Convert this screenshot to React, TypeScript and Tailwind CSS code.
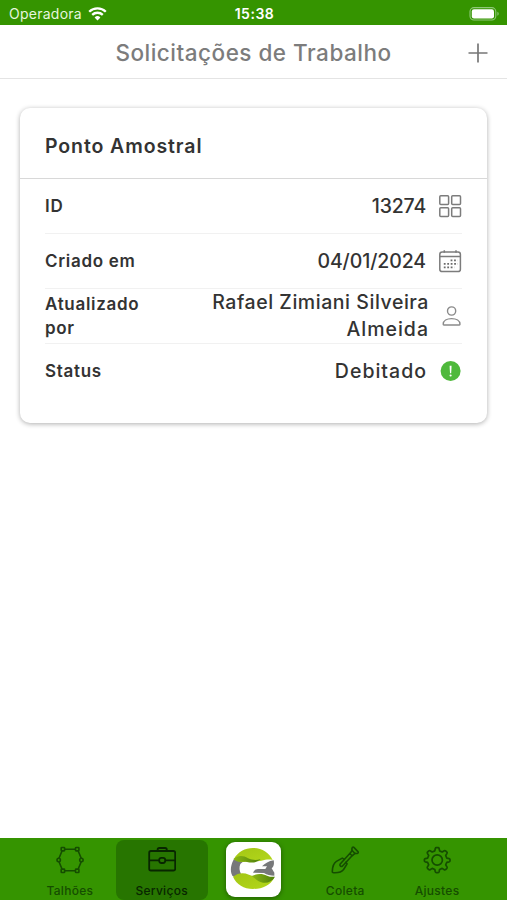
import { ReactNode } from "react";
import clsx from "clsx";

function WifiIcon() {
  return (
    <svg width="19" height="14" viewBox="0 0 19 14" fill="#fff">
      <path d="M9.5 13.4 6.6 10.4a4.2 4.2 0 0 1 5.8 0z" />
      <path
        d="M4.2 7.9a7.6 7.6 0 0 1 10.6 0M1.2 4.8a11.8 11.8 0 0 1 16.6 0"
        fill="none"
        stroke="#fff"
        strokeWidth="2.3"
      />
    </svg>
  );
}

function BatteryIcon() {
  return (
    <svg width="31" height="14" viewBox="0 0 31 14" fill="none">
      <rect x="1" y="0.6" width="25.8" height="12.4" rx="4" stroke="#8fc878" strokeWidth="1.1" />
      <rect x="2.8" y="2.2" width="22.2" height="9.2" rx="2.2" fill="#fff" />
      <path d="M28.4 4.8v4a2.2 2.2 0 0 0 0-4z" fill="#8fc878" />
    </svg>
  );
}

function GridIcon() {
  return (
    <svg width="24" height="24" viewBox="0 0 24 24" fill="none" stroke="#7c7c7c" strokeWidth="1.5">
      <rect x="1.8" y="1.8" width="8.8" height="8.8" rx="1" />
      <rect x="13.7" y="1.8" width="8.8" height="8.8" rx="1" />
      <rect x="1.8" y="13.7" width="8.8" height="8.8" rx="1" />
      <rect x="13.7" y="13.7" width="8.8" height="8.8" rx="1" />
    </svg>
  );
}

function CalendarIcon() {
  return (
    <svg width="24" height="24" viewBox="0 0 24 24" fill="none" stroke="#7c7c7c" strokeWidth="1.5">
      <rect x="1.8" y="3" width="20.6" height="19.6" rx="2.4" />
      <path d="M1.8 7.6h20.6M6.3 1.2v2.6M18 1.2v2.6" />
      <path
        d="M12.6 11.4h7M5.8 14.8h14M5.8 18.3h10.5"
        stroke="#6c6c6c"
        strokeWidth="1.8"
        strokeDasharray="1.8 1.65"
      />
    </svg>
  );
}

function PersonIcon() {
  return (
    <svg width="24" height="24" viewBox="0 0 24 24" fill="none" stroke="#8a8a8a" strokeWidth="1.4">
      <circle cx="13.6" cy="7" r="4.1" />
      <path d="M5.2 20.300c0-3.600 3.700-5.700 8.400-5.700s8.400 2.100 8.400 5.700c0 .5-.3.700-.7.700H5.900c-.4 0-.7-.2-.7-.7z" />
    </svg>
  );
}

function StatusIcon() {
  return (
    <svg width="24" height="24" viewBox="0 0 24 24">
      <circle cx="12.6" cy="12" r="10" fill="#4fb93c" />
      <path d="M11.6 6.8h2l-.4 7.400h-1.200z" fill="#fff" />
      <circle cx="12.6" cy="16.5" r="1.1" fill="#fff" />
    </svg>
  );
}

function FieldIcon() {
  return (
    <svg width="28" height="28" viewBox="0 0 28 28" fill="none" stroke="#154d00" strokeWidth="1.6">
      <path d="M8.6 3.2h11M8.600 24.800h11M6 5l-3 7.200M6 23l-3-7.200M22.200 5l3 7.200M22.200 23l3-7.200" />
      <rect x="5.2" y="1.5" width="3.4" height="3.4" rx="0.6" />
      <rect x="19.5" y="1.5" width="3.4" height="3.4" rx="0.6" />
      <rect x="5.2" y="23.1" width="3.4" height="3.4" rx="0.6" />
      <rect x="19.5" y="23.1" width="3.4" height="3.4" rx="0.6" />
      <circle cx="2.7" cy="14" r="1.7" />
      <circle cx="25.4" cy="14" r="1.7" />
    </svg>
  );
}

function BriefcaseIcon() {
  return (
    <svg width="28" height="28" viewBox="0 0 28 28" fill="none" stroke="#082600" strokeWidth="1.8">
      <rect x="1.2" y="5" width="26" height="19.5" rx="1.8" />
      <path d="M9.6 5V3.8c0-1 .8-1.8 1.8-1.8h5.600c1 0 1.800.8 1.800 1.800V5M1.200 14.400h10M17.200 14.400h10" />
      <rect x="11.2" y="11.8" width="6" height="5.2" rx="2.2" />
    </svg>
  );
}

function ShovelIcon() {
  return (
    <svg
      width="28"
      height="28"
      viewBox="0 0 28 28"
      fill="none"
      stroke="#154d00"
      strokeWidth="1.6"
      strokeLinejoin="round"
      strokeLinecap="round"
    >
      <path d="M21.4 1.4c.5-.4 1-.4 1.500 0l4 4.200c.4.500.4 1 0 1.500-.5.400-1.500.5-2.900.4l-2.900-3c-.4-1.500-.2-2.500.3-3.100z" />
      <path d="m21.3 4.5-2.500 3 2.300 2.300 2.900-2.500M18.800 7.500l-9.800 10.700c-.5 1.700 1 2.700 2.300 2L21.100 9.800" />
      <path d="m13.3 13.4-2-1.300-5.900 3.300C2.800 17 1.500 20 1.300 25.400c0 1 .4 1.400 1.500 1.300 4.900.2 8-.7 9.800-3.200l3.500-5.600-1.400-1.500" />
    </svg>
  );
}

function GearIcon() {
  return (
    <svg width="28" height="28" viewBox="0 0 28 28" fill="none" stroke="#154d00" strokeWidth="1.7" strokeLinejoin="round">
      <circle cx="14.2" cy="14" r="5.2" />
      <path d="M12.300 2.500q.2-.8 1-.8h1.800q.8 0 1 .8l.5 2.400 2.600 1.100 2.100-1.300q.7-.4 1.300.1l1.300 1.300q.5.600.1 1.300l-1.300 2.100 1.100 2.600 2.400.5q.8.200.8 1v1.200q0 .8-.8 1l-2.400.5-1.100 2.600 1.300 2.100q.4.700-.1 1.300l-1.300 1.300q-.6.500-1.300.1l-2.100-1.300-2.600 1.100-.5 2.300q-.2.800-1 .8h-1.800q-.8 0-1-.8l-.5-2.300-2.600-1.100-2.100 1.300q-.7.400-1.300-.1l-1.300-1.300q-.5-.6-.1-1.300l1.300-2.100-1.100-2.600-2.400-.5q-.8-.2-.8-1v-1.200q0-.8.800-1l2.400-.5 1.100-2.600-1.300-2.100q-.4-.7.100-1.300l1.300-1.300q.6-.5 1.300-.1L9.200 6l2.600-1.100z" />
    </svg>
  );
}

function Logo() {
  return (
    <svg width="55" height="55" viewBox="9 12 165 165">
      <defs>
        <linearGradient id="lime" x1="0" y1="0" x2="1" y2="1">
          <stop offset="0" stopColor="#a3c614" />
          <stop offset="1" stopColor="#b3d71c" />
        </linearGradient>
        <linearGradient id="leaf" x1="0" y1="0" x2="1" y2="0">
          <stop offset="0" stopColor="#8db813" />
          <stop offset="1" stopColor="#4d7f0c" />
        </linearGradient>
      </defs>
      <path d="M33 63C24 78 20 98 28 113c4 4 9 3 14 1l12-7c-5-8-6-20-2-29l7-6z" fill="#77787a" />
      <path d="M33 62C45 42 66 30 90 30c26 0 49 14 59 36-14-3-22 0-34 2-15 4-25-2-40 0-14 6-28 6-42-6z" fill="url(#lime)" />
      <path d="M31 63c15-12 30-11 44-2 14 6 26 7 38 2-12 12-26 12-41 9-14-2-29 3-41-9z" fill="url(#leaf)" />
      <path d="M152 67c2 9 1 18-6 24l8 13v9c-12 0-22-2-31-8l-33-1c3-7 8-11 15-11h22l5-8h-15c9-8 20-16 35-18z" fill="#77787a" />
      <path d="M30 116c16-12 31-13 48-6 20 10 47 10 75 10-11 22-35 33-63 33-27 0-50-14-60-37z" fill="url(#lime)" />
      <path d="M86 114c17-8 32-8 46-1 9 4 17 4 24 3-8 14-21 20-36 18-14-2-21-11-34-20z" fill="url(#leaf)" />
    </svg>
  );
}

function Row({
  label,
  icon,
  className,
  children,
}: {
  label: ReactNode;
  icon: ReactNode;
  className: string;
  children: ReactNode;
}) {
  return (
    <div className={clsx("flex items-center justify-between", className)}>
      <div className="text-[17px] leading-6 font-semibold tracking-[0.7px]">{label}</div>
      <div className="flex items-center text-right text-[19.5px] leading-[27px]">
        {children}
        {icon}
      </div>
    </div>
  );
}

function Tab({ icon, active, children }: { icon: ReactNode; active?: boolean; children: ReactNode }) {
  return (
    <button
      type="button"
      className={clsx(
        "mt-0.5 flex h-[60px] flex-1 flex-col items-center rounded-lg pt-1.5 text-[12px] font-medium tracking-[0.3px]",
        active ? "bg-[#277500] text-[#082600]" : "text-[#154d00]",
      )}
    >
      {icon}
      <span className="mt-[9px] leading-4 whitespace-nowrap">{children}</span>
    </button>
  );
}

export default function App() {
  return (
    <div className="flex h-[900px] w-[507px] flex-col overflow-hidden bg-white font-['Inter','Noto_Sans',sans-serif] text-[#333]">
      <div className="grid h-[25px] shrink-0 grid-cols-3 items-center bg-[#359400] pr-[7px] pl-[9px] text-[14px] text-white">
        <div className="flex items-center gap-1.5 pt-0.5">
          <span className="tracking-[0.25px] text-[#e6f5df]">Operadora</span>
          <WifiIcon />
        </div>
        <span className="pt-0.5 text-center font-semibold tracking-[0.5px]">15:38</span>
        <div className="flex justify-end pt-0.5">
          <BatteryIcon />
        </div>
      </div>

      <header className="grid h-[54px] shrink-0 grid-cols-[40px_1fr_40px] items-center border-b border-[#e4e4e4] px-2 pt-0.5">
        <h1 className="col-start-2 text-center text-[22.5px] font-medium tracking-[0.5px] whitespace-nowrap text-[#7c7c7c]">
          Solicitações de Trabalho
        </h1>
        <button type="button" className="flex justify-center pr-0.5">
          <svg width="20" height="20" viewBox="0 0 20 20" stroke="#777" strokeWidth="1.7">
            <path d="M10 .5v19M.5 10h19" />
          </svg>
        </button>
      </header>

      <main className="flex-1 px-5 pt-[29px]">
        <section className="h-[315px] rounded-[10px] bg-white shadow-[0_1px_5px_rgba(0,0,0,0.32)]">
          <h2 className="flex h-[71px] items-center border-b border-[#d8d8d8] px-[25px] pt-2 text-[19.5px] font-semibold tracking-[0.9px]">
            Ponto Amostral
          </h2>
          <div className="px-[25px]">
            <Row label="ID" icon={<GridIcon />} className="h-[55px] border-b border-[#f1f1f1]">
              <span className="mr-3 font-medium tracking-[-0.2px]">13274</span>
            </Row>
            <Row label="Criado em" icon={<CalendarIcon />} className="h-[55px] border-b border-[#f1f1f1]">
              <span className="mr-3 font-medium tracking-[-0.1px]">04/01/2024</span>
            </Row>
            <Row
              label={
                <>
                  Atualizado
                  <br />
                  por
                </>
              }
              icon={<PersonIcon />}
              className="h-[55px] border-b border-[#f1f1f1]"
            >
              <span className="mr-[9px] font-medium tracking-[0.55px] whitespace-nowrap">
                Rafael Zimiani Silveira
                <br />
                <span className="tracking-[1px]">Almeida</span>
              </span>
            </Row>
            <Row label="Status" icon={<StatusIcon />} className="h-[54px]">
              <span className="mr-[11px] font-medium tracking-[1px]">Debitado</span>
            </Row>
          </div>
        </section>
      </main>

      <nav className="flex h-[62px] shrink-0 bg-[#359400] px-6">
        <Tab icon={<FieldIcon />}>Talhões</Tab>
        <Tab icon={<BriefcaseIcon />} active>
          Serviços
        </Tab>
        <div className="flex flex-1 items-start justify-center pt-1">
          <div className="flex size-[55px] items-center justify-center rounded-[9px] bg-white shadow-[0_1px_5px_rgba(0,0,0,0.4)]">
            <Logo />
          </div>
        </div>
        <Tab icon={<ShovelIcon />}>Coleta</Tab>
        <Tab icon={<GearIcon />}>Ajustes</Tab>
      </nav>
    </div>
  );
}
